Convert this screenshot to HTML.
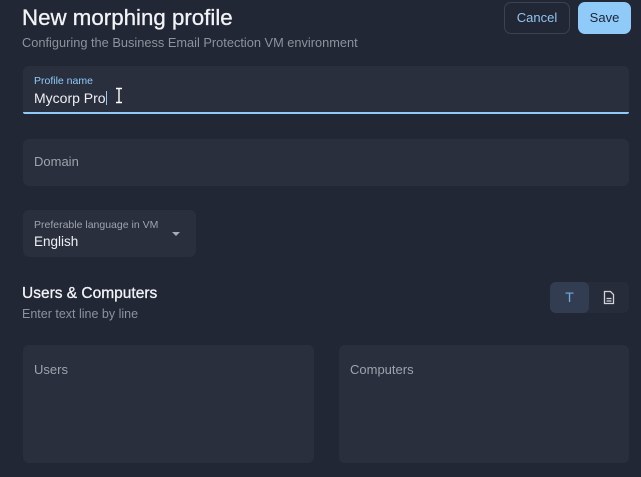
<!DOCTYPE html>
<html><head><style>
*{margin:0;padding:0;box-sizing:border-box}
body{width:641px;height:477px;background:#222736;font-family:"Liberation Sans",sans-serif;position:relative;overflow:hidden;color:#e8eaee}
.a{position:absolute}
.f{position:absolute;background:#2a2f3e;border-radius:6px}
.lbl{position:absolute;left:11px;color:#9ea3ad;font-size:13px}
</style></head><body>
<div class="a" style="left:22px;top:5px;font-size:22.3px;color:#f2f3f5;-webkit-text-stroke:0.3px #f2f3f5">New morphing profile</div>
<div class="a" style="left:22px;top:35px;font-size:12.8px;color:#8d929c">Configuring the Business Email Protection VM environment</div>
<div class="a" style="left:504px;top:2px;width:66px;height:32px;border:1px solid #3c4252;border-radius:7px;color:#90c4f0;font-size:13px;text-align:center;line-height:30px">Cancel</div>
<div class="a" style="left:578px;top:2px;width:53px;height:32px;background:#90caf9;border-radius:7px;color:#1c2433;font-size:13px;text-align:center;line-height:32px">Save</div>

<div class="f" style="left:23px;top:66px;width:606px;height:48px;border-bottom:2px solid #90caf9;border-radius:6px 6px 2px 2px">
<div class="a" style="left:11px;top:9px;font-size:10.5px;color:#90caf9">Profile name</div>
<div class="a" style="left:11px;top:24px;font-size:14px;color:#eef0f3">Mycorp Pro<span style="display:inline-block;width:1px;height:14px;background:#90caf9;vertical-align:-2px"></span></div>
<svg class="a" style="left:92px;top:21px" width="8" height="17" viewBox="0 0 8 17"><path d="M1 1.5h6M1 15.5h6M4 1.5v14" stroke="#fff" stroke-width="1.4" fill="none"/></svg>
</div>

<div class="f" style="left:23px;top:139px;width:606px;height:47px"><div class="lbl" style="top:15px">Domain</div></div>

<div class="f" style="left:23px;top:210px;width:173px;height:47px">
<div class="a" style="left:11px;top:9px;font-size:10.5px;color:#9ea3ad">Preferable language in VM</div>
<div class="a" style="left:11px;top:24px;font-size:13.5px;color:#eef0f3">English</div>
<div class="a" style="left:149px;top:22px;width:0;height:0;border-left:4px solid transparent;border-right:4px solid transparent;border-top:4px solid #aab"></div>
</div>

<div class="a" style="left:22px;top:285px;font-size:15.5px;color:#f2f3f5;-webkit-text-stroke:0.3px #f2f3f5">Users &amp; Computers</div>
<div class="a" style="left:22px;top:307px;font-size:12.5px;color:#8d929c">Enter text line by line</div>

<div class="a" style="left:550px;top:282px;width:79px;height:31px;background:#272c3b;border-radius:6px"></div>
<div class="a" style="left:550px;top:282px;width:39px;height:31px;background:#333d51;border-radius:6px;color:#6fa9e0;font-size:14px;text-align:center;line-height:31px">T</div>
<svg class="a" style="left:603px;top:290px" width="12" height="15" viewBox="0 0 12 15"><path d="M1.5 1.5h6l3 3v9h-9z" fill="none" stroke="#d0d3da" stroke-width="1.3"/><path d="M3.5 8.5h5M3.5 11h5" stroke="#d0d3da" stroke-width="1.2"/></svg>

<div class="f" style="left:23px;top:345px;width:291px;height:118px"><div class="lbl" style="top:17px">Users</div></div>
<div class="f" style="left:339px;top:345px;width:290px;height:118px"><div class="lbl" style="top:17px">Computers</div></div>
</body></html>
